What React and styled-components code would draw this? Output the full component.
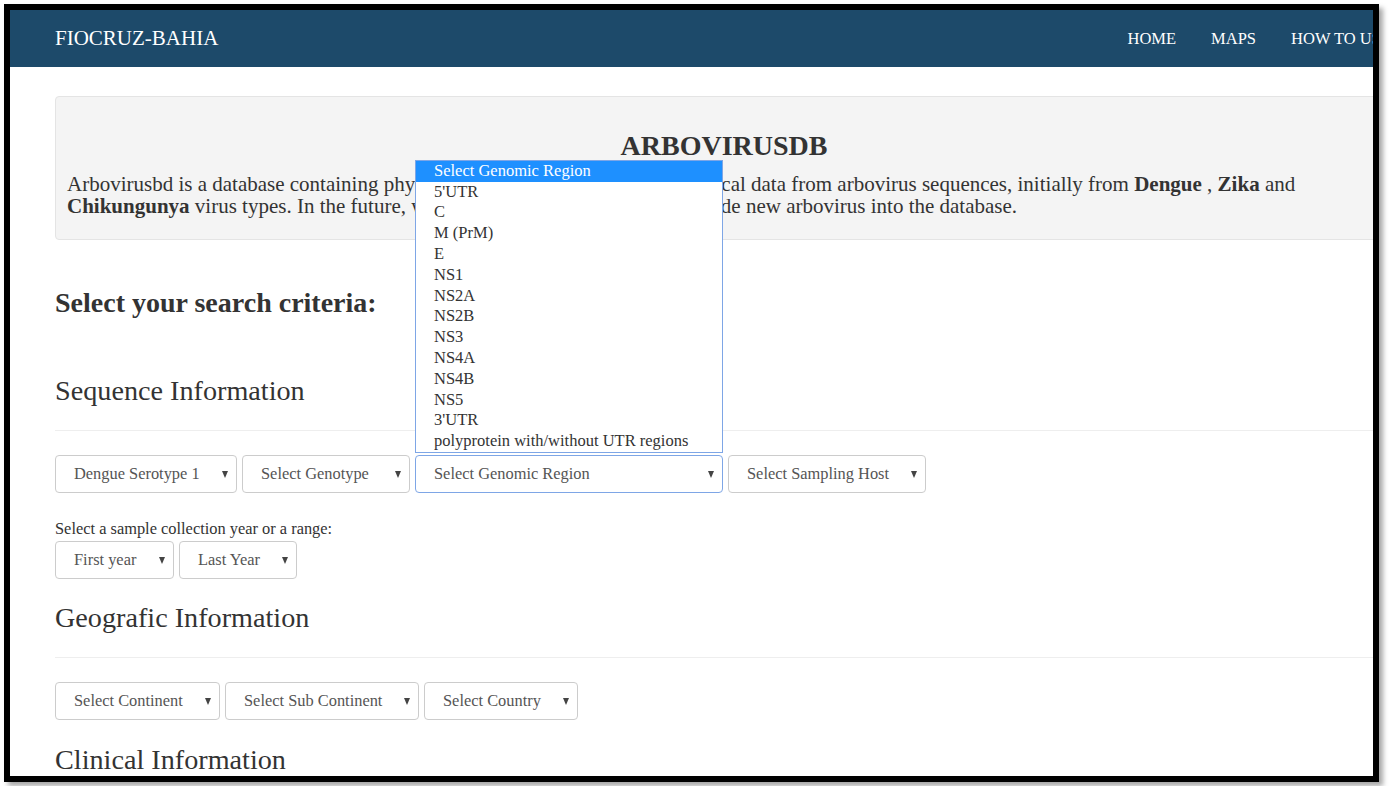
import React from "react";
import styled, { createGlobalStyle } from "styled-components";

const GlobalStyle = createGlobalStyle`
  html, body {
    margin: 0;
    padding: 0;
    background: #fff;
  }
  body {
    font-family: "Liberation Serif", "Times New Roman", serif;
    color: #333;
  }
`;

const regions = [
  "Select Genomic Region",
  "5'UTR",
  "C",
  "M (PrM)",
  "E",
  "NS1",
  "NS2A",
  "NS2B",
  "NS3",
  "NS4A",
  "NS4B",
  "NS5",
  "3'UTR",
  "polyprotein with/without UTR regions",
];

export default function App() {
  return (
    <>
      <GlobalStyle />
      <Frame>
        <Page>
          <Navbar>
            <Brand>FIOCRUZ-BAHIA</Brand>
            <Menu>
              <MenuItem>HOME</MenuItem>
              <MenuItem>MAPS</MenuItem>
              <MenuItem>HOW TO USE</MenuItem>
              <MenuItem>ABOUT</MenuItem>
            </Menu>
          </Navbar>

          <Content>
            <Jumbotron>
              <Title>ARBOVIRUSDB</Title>
              <Intro>
                Arbovirusbd is a database containing phylogenetic, clinical, and epidemiological data from
                arbovirus sequences, initially from <b>Dengue</b> , <b>Zika</b> and <b>Chikungunya</b> virus
                types. In the future, we are planning to expand, and include new arbovirus into the database.
              </Intro>
            </Jumbotron>

            <Criteria>Select your search criteria:</Criteria>

            <SectionTitle $top={56}>Sequence Information</SectionTitle>
            <Divider />
            <Row>
              <Select $w={182}>
                Dengue Serotype 1 <Caret />
              </Select>
              <Select $w={168}>
                Select Genotype <Caret />
              </Select>
              <SelectWrap>
                <Select $w={308} $focused>
                  Select Genomic Region <Caret />
                </Select>
                <OptionList>
                  {regions.map((r, i) => (
                    <Option key={r} $active={i === 0}>
                      {r}
                    </Option>
                  ))}
                </OptionList>
              </SelectWrap>
              <Select $w={198}>
                Select Sampling Host <Caret />
              </Select>
            </Row>

            <Label>Select a sample collection year or a range:</Label>
            <Row>
              <Select $w={119}>
                First year <Caret />
              </Select>
              <Select $w={118}>
                Last Year <Caret />
              </Select>
            </Row>

            <SectionTitle $top={23}>Geografic Information</SectionTitle>
            <Divider />
            <Row>
              <Select $w={165}>
                Select Continent <Caret />
              </Select>
              <Select $w={194}>
                Select Sub Continent <Caret />
              </Select>
              <Select $w={154}>
                Select Country <Caret />
              </Select>
            </Row>

            <SectionTitle $top={24}>Clinical Information</SectionTitle>
          </Content>
        </Page>
      </Frame>
    </>
  );
}

const Frame = styled.div`
  margin: 4px;
  width: 1363px;
  height: 766px;
  border: 6px solid #000;
  box-shadow: 4px 4px 5px rgba(0, 0, 0, 0.35);
  overflow: hidden;
`;

const Page = styled.div`
  width: 1500px;
`;

const Navbar = styled.nav`
  height: 57px;
  background: #1d4a6a;
  display: flex;
  align-items: center;
  padding-left: 45px;
`;

const Brand = styled.a`
  width: 1055px;
  color: #fff;
  font-size: 21px;
  text-decoration: none;
`;

const Menu = styled.ul`
  display: flex;
  list-style: none;
  margin: 0;
  padding: 0;
`;

const MenuItem = styled.li`
  color: #fff;
  font-size: 16.5px;
  padding: 0 17.5px;
  white-space: nowrap;
`;

const Content = styled.div`
  padding-left: 45px;
`;

const Jumbotron = styled.div`
  margin-top: 29px;
  width: 1338px;
  box-sizing: border-box;
  padding: 33px 11px 22px;
  background: #f4f4f4;
  border: 1px solid #e4e4e4;
  border-radius: 4px;
`;

const Title = styled.h1`
  margin: 0 0 11px;
  font-size: 28px;
  line-height: 32px;
  font-weight: bold;
  text-align: center;
`;

const Intro = styled.p`
  margin: 0;
  font-size: 21px;
  line-height: 22px;
`;

const Criteria = styled.h3`
  margin: 47px 0 0;
  font-size: 28px;
  line-height: 32px;
  font-weight: bold;
`;

const SectionTitle = styled.h3`
  margin: ${(p) => p.$top}px 0 0;
  font-size: 28.2px;
  line-height: 32px;
  font-weight: normal;
`;

const Divider = styled.hr`
  width: 1338px;
  margin: 23px 0 24px;
  border: 0;
  border-top: 1px solid #eee;
`;

const Row = styled.div`
  display: flex;
  gap: 5px;
`;

const Select = styled.div`
  width: ${(p) => p.$w}px;
  height: 38px;
  box-sizing: border-box;
  display: flex;
  align-items: center;
  justify-content: space-between;
  padding: 0 8px 0 18px;
  background: #fff;
  border: 1px solid ${(p) => (p.$focused ? "#7ea6e6" : "#ccc")};
  border-radius: 4px;
  font-size: 16.4px;
  color: #555;
  white-space: nowrap;
`;

const Caret = styled.span`
  width: 0;
  height: 0;
  border-left: 3.5px solid transparent;
  border-right: 3.5px solid transparent;
  border-top: 7px solid #444;
`;

const SelectWrap = styled.div`
  position: relative;
`;

const OptionList = styled.ul`
  position: absolute;
  left: 0;
  bottom: calc(100% + 2px);
  width: 100%;
  box-sizing: border-box;
  margin: 0;
  padding: 0;
  list-style: none;
  background: #fff;
  border: 1px solid #7ea6e6;
  z-index: 10;
`;

const Option = styled.li`
  height: 20.8px;
  line-height: 20.8px;
  padding-left: 18px;
  font-size: 16.5px;
  white-space: nowrap;
  background: ${(p) => (p.$active ? "#1e90ff" : "#fff")};
  color: ${(p) => (p.$active ? "#fff" : "#333")};
`;

const Label = styled.div`
  margin: 26px 0 2px;
  font-size: 16.4px;
  line-height: 20px;
`;
